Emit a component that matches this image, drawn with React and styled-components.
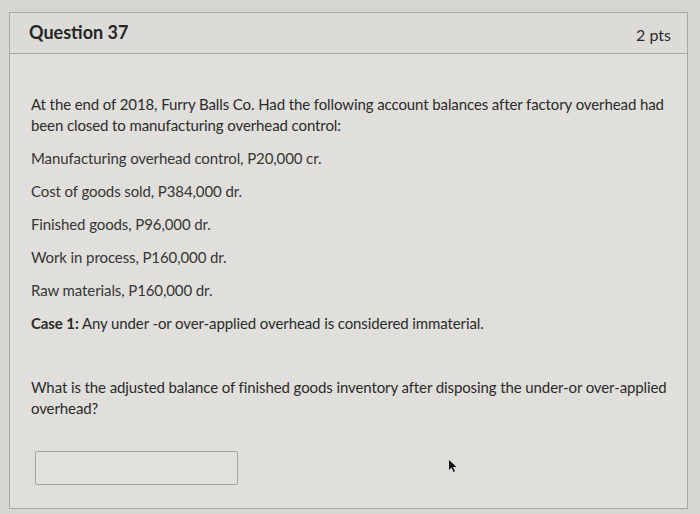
import styled, { createGlobalStyle } from 'styled-components'

const GlobalStyle = createGlobalStyle`
  html, body {
    margin: 0;
    padding: 0;
    background: #d6d5d1;
  }
  body {
    font-family: Lato, "Open Sans", sans-serif;
    color: #2d2d2d;
  }
`

const Page = styled.div`
  width: 700px;
  height: 514px;
  padding: 12px 0 0 9px;
  box-sizing: border-box;
  overflow: hidden;
`

const Card = styled.div`
  position: relative;
  width: 679px;
  height: 497px;
  box-sizing: border-box;
  border: 1px solid #a8a7a3;
  background: #e0dfdb;
`

const Header = styled.div`
  display: flex;
  justify-content: space-between;
  align-items: center;
  height: 40px;
  padding: 0 16px 0 19px;
  background: #dcdbd7;
  border-bottom: 1px solid #a8a7a3;
`

const Title = styled.h2`
  margin: 0 0 2px;
  font-size: 18px;
  font-weight: 700;
  color: #262626;
`

const Points = styled.span`
  margin-top: 2px;
  font-size: 16px;
  color: #2a2a2a;
`

const Body = styled.div`
  padding: 40px 16px 0 21px;
`

const Para = styled.p`
  margin: 0 0 12px;
  font-size: 15px;
  line-height: 21px;
  letter-spacing: -0.1px;
  color: ${(p) => (p.$soft ? '#363636' : '#2b2b2b')};
`

const Spacer = styled.div`
  height: 31px;
`

const Answer = styled.div`
  width: 201px;
  height: 32px;
  margin: 32px 0 0 4px;
  border: 1px solid #a5a4a0;
  border-radius: 2px;
  background: #e2e1dd;
`

const Cursor = styled.svg`
  position: absolute;
  left: 438px;
  top: 446px;
`

const balances = [
  'Manufacturing overhead control, P20,000 cr.',
  'Cost of goods sold, P384,000 dr.',
  'Finished goods, P96,000 dr.',
  'Work in process, P160,000 dr.',
  'Raw materials, P160,000 dr.',
]

export default function App() {
  return (
    <>
      <GlobalStyle />
      <Page>
        <Card>
          <Header>
            <Title>Question 37</Title>
            <Points>2 pts</Points>
          </Header>
          <Body>
            <Para>
              At the end of 2018, Furry Balls Co. Had the following account balances after factory overhead had
              been closed to manufacturing overhead control:
            </Para>
            {balances.map((b) => (
              <Para key={b} $soft>{b}</Para>
            ))}
            <Para>
              <strong>Case 1:</strong> Any under -or over-applied overhead is considered immaterial.
            </Para>
            <Spacer />
            <Para>
              What is the adjusted balance of finished goods inventory after disposing the under-or over-applied
              overhead?
            </Para>
            <Answer />
          </Body>
          <Cursor width="10" height="14" viewBox="0 0 10 14">
            <path d="M1 1 L1 11 L3.5 8.5 L5.5 13 L7 12.3 L5 8 L8.5 8 Z" fill="#111" />
          </Cursor>
        </Card>
      </Page>
    </>
  )
}
